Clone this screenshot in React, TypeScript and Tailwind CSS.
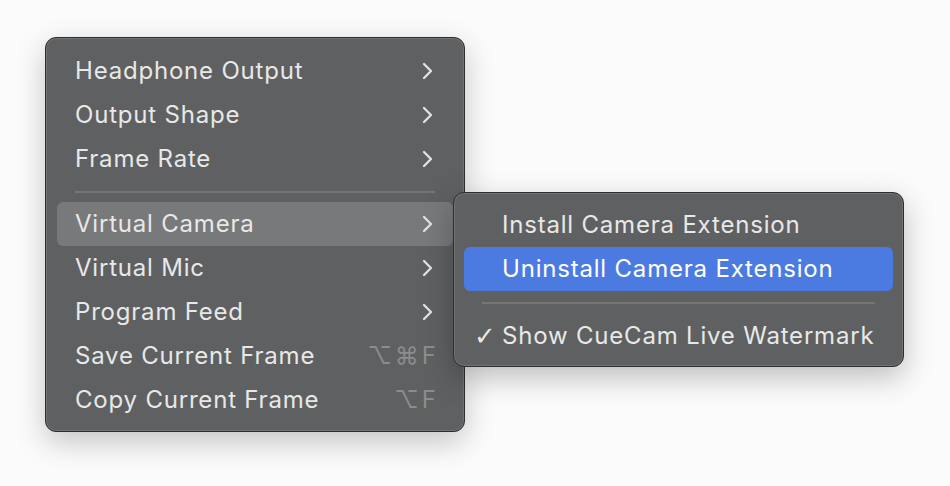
import React from "react";

const Chevron = () => (
  <svg width="11" height="18" viewBox="0 0 11 18" className="shrink-0">
    <path d="M2 2 L9 9 L2 16" fill="none" stroke="#e2e2e2" strokeWidth="2.3" strokeLinecap="round" strokeLinejoin="round" />
  </svg>
);

type Item = { label: string; sub?: boolean; shortcut?: string; active?: boolean };

const Row = ({ item }: { item: Item }) => (
  <div
    className={`flex items-center h-[44px] mx-[11px] pl-[18px] pr-[20px] rounded-[6px] ${
      item.active ? "bg-[#78797a]" : ""
    }`}
  >
    <span className="flex-1 text-[#e8e8e8]">{item.label}</span>
    {item.sub && <Chevron />}
    {item.shortcut && (
      <span className="text-[#8b8c8d] text-[24px] tracking-[3px] mr-[-6px]">
        {item.shortcut}
      </span>
    )}
  </div>
);

export default function App() {
  const top: Item[] = [
    { label: "Headphone Output", sub: true },
    { label: "Output Shape", sub: true },
    { label: "Frame Rate", sub: true },
  ];
  const bottom: Item[] = [
    { label: "Virtual Camera", sub: true, active: true },
    { label: "Virtual Mic", sub: true },
    { label: "Program Feed", sub: true },
    { label: "Save Current Frame", shortcut: "⌥⌘F" },
    { label: "Copy Current Frame", shortcut: "⌥F" },
  ];
  return (
    <div
      className="w-[950px] h-[486px] bg-[#fbfbfb] pl-[45px] pt-[37px] text-[24px] tracking-[0.8px]"
      style={{ fontFamily: "Inter, 'DejaVu Sans', sans-serif" }}
    >
      <div className="relative w-[420px] h-[395px] bg-[#5f6061] rounded-[11px] border border-[#2e2e2e] shadow-[0_10px_30px_rgba(0,0,0,0.22),inset_0_0_0_1px_rgba(255,255,255,0.12)] pt-[11px]">
        {top.map((i) => (
          <Row key={i.label} item={i} />
        ))}
        <div className="h-[21px] flex items-center mx-[29px]">
          <div className="h-[2px] w-full bg-[#747576]" />
        </div>
        {bottom.map((i) => (
          <Row key={i.label} item={i} />
        ))}

        <div className="absolute left-[407px] top-[154px] w-[451px] h-[175px] bg-[#5f6061] rounded-[11px] border border-[#2e2e2e] shadow-[0_10px_30px_rgba(0,0,0,0.25),inset_0_0_0_1px_rgba(255,255,255,0.12)] pt-[10px]">
          <div className="flex items-center h-[44px] mx-[10px] pl-[38px] text-[#e8e8e8]">Install Camera Extension</div>
          <div className="flex items-center h-[44px] mx-[10px] pl-[38px] rounded-[6px] bg-[#4b7be0] text-white">
            Uninstall Camera Extension
          </div>
          <div className="h-[23px] flex items-center mx-[28px]">
            <div className="h-[2px] w-full bg-[#747576]" />
          </div>
          <div className="flex items-center h-[44px] mx-[10px] pl-[10px] text-[#e8e8e8]">
            <span className="w-[28px] text-[26px] leading-none" style={{ fontFamily: "'DejaVu Sans', sans-serif" }}>✓</span>
            <span>Show CueCam Live Watermark</span>
          </div>
        </div>
      </div>
    </div>
  );
}
